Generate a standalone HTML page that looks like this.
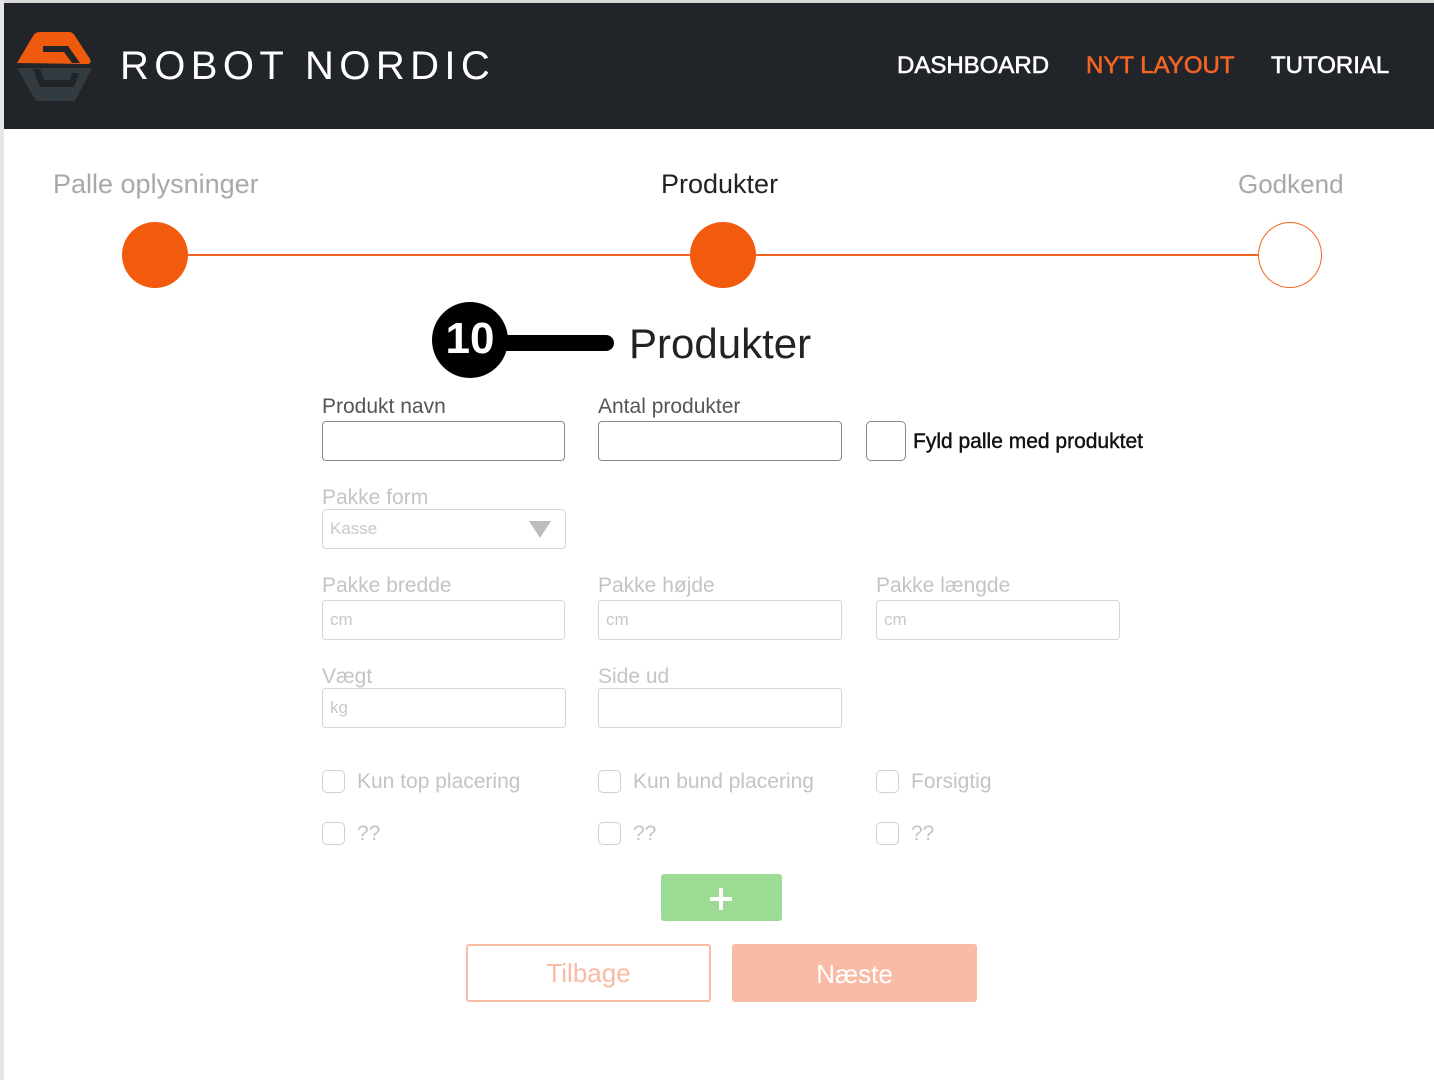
<!DOCTYPE html>
<html><head><meta charset="utf-8"><style>
*{margin:0;padding:0;box-sizing:border-box}
body{width:1434px;height:1080px;background:#fff;position:relative;overflow:hidden;font-family:"Liberation Sans",sans-serif}
.a{position:absolute;white-space:nowrap}
#hdr{position:absolute;left:4px;top:3px;width:1430px;height:126px;background:#212429}
#lb{position:absolute;left:0;top:0;width:4px;height:1080px;background:#e6e6e6}
#tb{position:absolute;left:0;top:0;width:1434px;height:3px;background:#d8d8d8}
.nav{font-size:24px;color:#fff;top:52px;-webkit-text-stroke:0.6px currentColor}
.lab{font-size:21px;color:#555}
.dis{color:#c4c4c4}
.inp{position:absolute;border:1.5px solid #888;border-radius:4px;height:40px}
.inp.d{border-color:#d6d6d6}
.ph{font-size:17px;color:#c8c8c8;position:absolute;left:7px;top:9px}
.cb{position:absolute;width:23px;height:23px;border:1.5px solid #d0d0d0;border-radius:5px}
.cl{font-size:21px;color:#c4c4c4}
</style></head><body>
<div id="tb"></div><div id="lb"></div>
<div id="hdr"></div>
<svg class="a" style="left:0;top:0" width="100" height="110" viewBox="0 0 100 110">
<path d="M17 63 L33 36 Q35 32 40 32 L69 32 Q73 32 75 36 L90 59 Q92 64 87 64 Z" fill="#f05a0e"/>
<path d="M43 46 L68 46 L80 63 L72 63 L64 52 L43 52 Z" fill="#212429"/>
<path d="M17 68 L92 68 L75 101 L36 101 Z" fill="#323b40"/>
<path d="M33 69 L40 69 L44 80 L70 80 L72 73 L79 73 L74 87 L40 87 Z" fill="#212429"/>
</svg>
<div class="a" style="left:120px;top:44px;font-size:40px;letter-spacing:5.4px;color:#fff">ROBOT NORDIC</div>
<div class="a nav" style="left:897px">DASHBOARD</div>
<div class="a nav" style="left:1086px;color:#f26522">NYT LAYOUT</div>
<div class="a nav" style="left:1271px">TUTORIAL</div>

<div class="a" style="left:53px;top:169px;font-size:27px;color:#a8a8a8">Palle oplysninger</div>
<div class="a" style="left:661px;top:169px;font-size:27px;color:#222">Produkter</div>
<div class="a" style="left:1238px;top:169px;font-size:26px;color:#a8a8a8">Godkend</div>
<div class="a" style="left:155px;top:254px;width:1135px;height:2px;background:#f26522"></div>
<div class="a" style="left:122px;top:222px;width:66px;height:66px;border-radius:50%;background:#f25a0e"></div>
<div class="a" style="left:690px;top:222px;width:66px;height:66px;border-radius:50%;background:#f25a0e"></div>
<div class="a" style="left:1258px;top:222px;width:64px;height:66px;border-radius:50%;background:#fff;border:1.5px solid #f26522"></div>

<div class="a" style="left:500px;top:335px;width:114px;height:16px;border-radius:8px;background:#000"></div>
<div class="a" style="left:432px;top:302px;width:76px;height:76px;border-radius:50%;background:#000"></div>
<div class="a" style="left:432px;top:314px;width:76px;text-align:center;font-weight:bold;font-size:44px;color:#fff">10</div>
<div class="a" style="left:629px;top:320px;font-size:42px;color:#222">Produkter</div>

<div class="a lab" style="left:322px;top:395px">Produkt navn</div>
<div class="inp" style="left:322px;top:421px;width:243px"></div>
<div class="a lab" style="left:598px;top:395px">Antal produkter</div>
<div class="inp" style="left:598px;top:421px;width:244px"></div>
<div class="cb" style="left:866px;top:421px;width:40px;height:40px;border-color:#888"></div>
<div class="a" style="left:913px;top:430px;font-size:21px;color:#111;-webkit-text-stroke:0.4px #111">Fyld palle med produktet</div>

<div class="a lab dis" style="left:322px;top:486px">Pakke form</div>
<div class="inp d" style="left:322px;top:509px;width:244px"><span class="ph">Kasse</span>
<div class="a" style="left:206px;top:11px;width:0;height:0;border-left:11px solid transparent;border-right:11px solid transparent;border-top:17px solid #bdbdbd"></div></div>

<div class="a lab dis" style="left:322px;top:574px">Pakke bredde</div>
<div class="inp d" style="left:322px;top:600px;width:243px"><span class="ph">cm</span></div>
<div class="a lab dis" style="left:598px;top:574px">Pakke højde</div>
<div class="inp d" style="left:598px;top:600px;width:244px"><span class="ph">cm</span></div>
<div class="a lab dis" style="left:876px;top:574px">Pakke længde</div>
<div class="inp d" style="left:876px;top:600px;width:244px"><span class="ph">cm</span></div>

<div class="a lab dis" style="left:322px;top:665px">Vægt</div>
<div class="inp d" style="left:322px;top:688px;width:244px"><span class="ph">kg</span></div>
<div class="a lab dis" style="left:598px;top:665px">Side ud</div>
<div class="inp d" style="left:598px;top:688px;width:244px"></div>

<div class="cb" style="left:322px;top:770px"></div><div class="a cl" style="left:357px;top:770px">Kun top placering</div>
<div class="cb" style="left:598px;top:770px"></div><div class="a cl" style="left:633px;top:770px">Kun bund placering</div>
<div class="cb" style="left:876px;top:770px"></div><div class="a cl" style="left:911px;top:770px">Forsigtig</div>
<div class="cb" style="left:322px;top:822px"></div><div class="a cl" style="left:357px;top:822px">??</div>
<div class="cb" style="left:598px;top:822px"></div><div class="a cl" style="left:633px;top:822px">??</div>
<div class="cb" style="left:876px;top:822px"></div><div class="a cl" style="left:911px;top:822px">??</div>

<div class="a" style="left:661px;top:874px;width:121px;height:47px;background:#9cdb94;border-radius:3px"></div>
<div class="a" style="left:710px;top:897px;width:22px;height:4px;background:#fff"></div>
<div class="a" style="left:719px;top:888px;width:4px;height:22px;background:#fff"></div>

<div class="a" style="left:466px;top:944px;width:245px;height:58px;border:2.5px solid #f9bba3;border-radius:3px;text-align:center;line-height:55px;font-size:26px;color:#f9bba3">Tilbage</div>
<div class="a" style="left:732px;top:944px;width:245px;height:58px;background:#f9bba5;border-radius:3px;text-align:center;line-height:60px;font-size:26px;color:#fff">Næste</div>
</body></html>
